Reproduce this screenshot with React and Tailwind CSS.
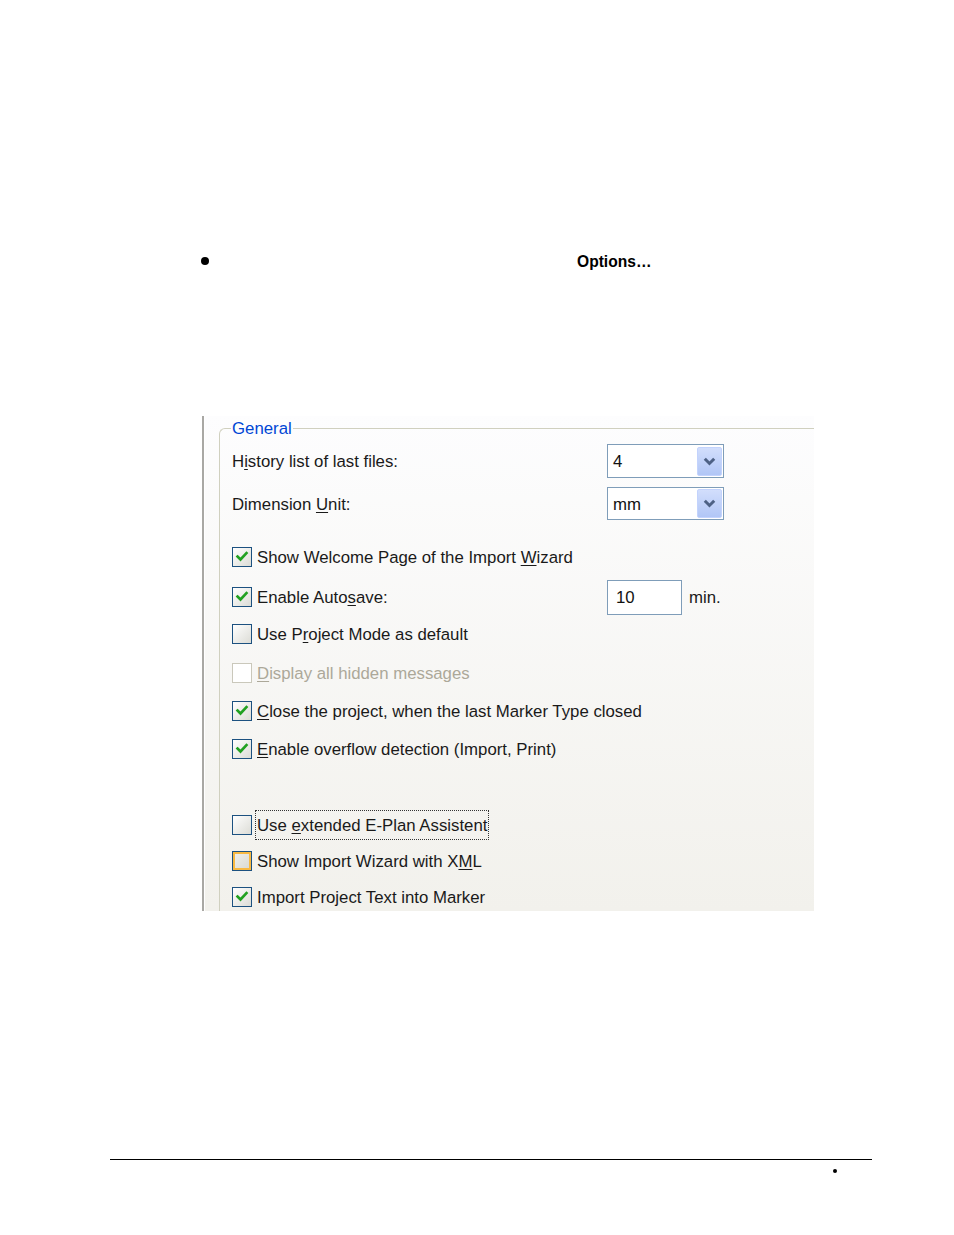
import React from 'react';

const font = { fontFamily: '"Liberation Sans", Arial, sans-serif' };

const Check = () => (
  <svg width="14" height="14" viewBox="0 0 14 14">
    <path d="M2.5 6.5 L5.5 9.5 L11.5 3" fill="none" stroke="#21a121" strokeWidth="2.6" strokeLinecap="square" />
  </svg>
);

const Box = ({ checked, disabled, hover }) => {
  let cls = 'w-[20px] h-[20px] flex items-center justify-center shrink-0 border ';
  if (disabled) cls += 'border-[#cac8bb] bg-white';
  else if (hover) cls += 'border-[#1c5180] bg-linear-to-br from-[#f2f2ee] to-[#d8d8d2] shadow-[inset_0_0_0_2px_#f8b943]';
  else cls += 'border-[#1c5180] bg-linear-to-br from-[#ffffff] to-[#dcdcd6]';
  return <div className={cls}>{checked && <Check />}</div>;
};

const U = ({ children }) => <span className="underline underline-offset-2">{children}</span>;

const CheckRow = ({ checked, disabled, hover, focus, className, children }) => (
  <div className={'flex items-center h-[30px] ' + className}>
    <Box checked={checked} disabled={disabled} hover={hover} />
    <span
      className={
        'ml-[4px] pt-[2px] ' +
        (disabled ? 'text-[#aca899] ' : 'text-[#1a1a1a] ') +
        (focus ? 'outline outline-1 outline-dotted outline-[#333] px-[1px]' : 'px-[1px]')
      }
    >
      {children}
    </span>
  </div>
);

const Combo = ({ value }) => (
  <div className="w-[117px] h-full border border-[#7f9db9] bg-white flex items-center justify-between pl-[5px] pr-[1px]">
    <span className="text-[#111] pt-[2px]">{value}</span>
    <div className="w-[25px] h-[29px] rounded-[2px] bg-linear-to-b from-[#d2defc] to-[#b1c6f6] border border-[#c3d3fd] flex items-center justify-center">
      <svg width="13" height="9" viewBox="0 0 13 9">
        <path d="M1.8 1.8 L6.5 6.5 L11.2 1.8" fill="none" stroke="#4d6185" strokeWidth="3" />
      </svg>
    </div>
  </div>
);

export default function App() {
  return (
    <div className="w-[954px] h-[1235px] bg-white relative text-[16.8px]" style={font}>
      <div className="pt-[251px] h-[271px] flex items-center">
        <div className="ml-[201px] w-[8px] h-[8px] rounded-full bg-black" />
        <span className="ml-[368px] pt-[2px] font-bold text-[15.6px] text-black">Options…</span>
      </div>

      <div className="mt-[145px] ml-[202px] w-[612px] h-[495px] overflow-hidden border-l-2 border-[#a9a8a4] bg-linear-to-b from-[#fdfdfe] to-[#f2f1ec]">
        <div className="border-l border-white h-full pl-[14px] pt-[1px]">
          <fieldset className="border-l border-t border-[#d0d0bf] rounded-tl-[6px] h-[520px] pl-[12px] min-w-0">
            <legend className="px-[1px] leading-[20px] pt-[2px] text-[#0046d5] ml-[-1px]">General</legend>

            <div className="mt-[5px] h-[34px] flex items-center">
              <span className="w-[375px] text-[#1a1a1a] pt-[2px]">H<U>i</U>story list of last files:</span>
              <Combo value="4" />
            </div>
            <div className="mt-[9px] h-[33px] flex items-center">
              <span className="w-[375px] text-[#1a1a1a] pt-[2px]">Dimension <U>U</U>nit:</span>
              <Combo value="mm" />
            </div>

            <CheckRow checked className="mt-[22px]">Show Welcome Page of the Import <U>W</U>izard</CheckRow>

            <div className="mt-[7px] h-[36px] flex items-center">
              <div className="w-[375px] flex items-center">
                <Box checked />
                <span className="ml-[4px] px-[1px] pt-[2px] text-[#1a1a1a]">Enable Auto<U>s</U>ave:</span>
              </div>
              <div className="w-[75px] h-[35px] border border-[#7f9db9] bg-white flex items-center pl-[8px] pt-[1px] text-[#111]">10</div>
              <span className="ml-[7px] pt-[2px] text-[#1a1a1a]">min.</span>
            </div>

            <CheckRow className="mt-[4px]">Use P<U>r</U>oject Mode as default</CheckRow>
            <CheckRow disabled className="mt-[9px]"><U>D</U>isplay all hidden messages</CheckRow>
            <CheckRow checked className="mt-[8px]"><U>C</U>lose the project, when the last Marker Type closed</CheckRow>
            <CheckRow checked className="mt-[8px]"><U>E</U>nable overflow detection (Import, Print)</CheckRow>

            <CheckRow focus className="mt-[46px]">Use <U>e</U>xtended E-Plan Assistent</CheckRow>
            <CheckRow hover className="mt-[6px]">Show Import Wizard with X<U>M</U>L</CheckRow>
            <CheckRow checked className="mt-[6px]">Import Project Text into Marker</CheckRow>
          </fieldset>
        </div>
      </div>

      <div className="mt-[248px] ml-[110px] w-[762px] h-px bg-black" />
      <div className="mt-[9px] ml-[833px] w-[4px] h-[4px] rounded-full bg-black" />
    </div>
  );
}
